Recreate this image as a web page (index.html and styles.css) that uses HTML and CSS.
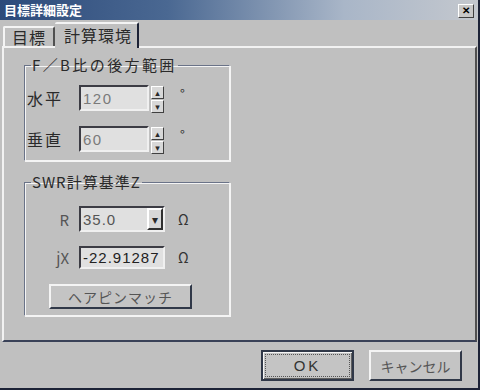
FILE: index.html
```html
<!DOCTYPE html>
<html lang="ja">
<head>
  <meta charset="UTF-8" />
  <title>目標詳細設定</title>
  <link rel="stylesheet" href="styles.css">
</head>
<body>
  <div class="window">
    <div class="titlebar">
      <span class="title">目標詳細設定</span>
      <button class="close-btn" type="button">&#x2715;</button>
    </div>

    <div class="tabs">
      <div class="tab">目標</div>
      <div class="tab active">計算環境</div>
    </div>

    <div class="panel">
      <fieldset class="group group-fb">
        <legend>F／B比の後方範囲</legend>
        <div class="row">
          <label>水平</label>
          <div class="spin">
            <input type="text" class="field dim" value="120" />
            <span class="spin-btns"><span class="arrow">&#9652;</span><span class="arrow">&#9662;</span></span>
          </div>
          <span class="unit">°</span>
        </div>
        <div class="row">
          <label>垂直</label>
          <div class="spin">
            <input type="text" class="field dim" value="60" />
            <span class="spin-btns"><span class="arrow">&#9652;</span><span class="arrow">&#9662;</span></span>
          </div>
          <span class="unit">°</span>
        </div>
      </fieldset>

      <fieldset class="group group-swr">
        <legend>SWR計算基準Z</legend>
        <div class="row">
          <label class="right">R</label>
          <div class="combo">
            <span class="combo-value">35.0</span>
            <span class="combo-btn">&#9662;</span>
          </div>
          <span class="unit">Ω</span>
        </div>
        <div class="row">
          <label class="right">jX</label>
          <input type="text" class="field wide" value="-22.91287" />
          <span class="unit">Ω</span>
        </div>
        <button type="button" class="btn hairpin">ヘアピンマッチ</button>
      </fieldset>
    </div>

    <div class="footer">
      <button type="button" class="btn default">OK</button>
      <button type="button" class="btn">キャンセル</button>
    </div>
  </div>
</body>
</html>
```

FILE: styles.css
```css
* {
  box-sizing: border-box;
}

body {
  margin: 0;
  font-family: "Noto Sans CJK JP", "DejaVu Sans", sans-serif;
  color: #2a2a2a;
  background: #c0c0c0;
}

.window {
  width: 480px;
  height: 390px;
  background: #c0c0c0;
  border-right: 2px solid #1c2236;
  border-bottom: 2px solid #1c2236;
  display: flex;
  flex-direction: column;
}

.titlebar {
  height: 20px;
  background: linear-gradient(to right, #2c4a7a 0%, #4a6892 35%, #a9b6c8 72%, #c4c8ce 100%);
  display: flex;
  align-items: center;
  justify-content: space-between;
  padding: 0 4px 0 4px;
}

.title {
  color: #fff;
  font-size: 13px;
  font-weight: bold;
  line-height: 20px;
}

.close-btn {
  width: 16px;
  height: 14px;
  margin-top: 2px;
  padding: 0;
  font-size: 10px;
  font-weight: bold;
  line-height: 10px;
  color: #000;
  background: #c8c8c8;
  border: 1px solid;
  border-color: #fff #404040 #404040 #fff;
}

.tabs {
  height: 26px;
  display: flex;
  align-items: flex-end;
  padding-left: 3px;
  position: relative;
  z-index: 1;
}

.tab {
  width: 52px;
  height: 20px;
  padding: 0 0 0 7px;
  font-size: 16px;
  line-height: 18px;
  letter-spacing: 1px;
  white-space: nowrap;
  border: 2px solid;
  border-color: #f4f4f4 #505050 transparent #f4f4f4;
  border-bottom: none;
  border-radius: 2px 2px 0 0;
  background: #c0c0c0;
}

.tab.active {
  width: 84px;
  height: 26px;
  margin-bottom: -2px;
  padding: 0 0 0 9px;
  line-height: 22px;
  border-left: 0;
  border-right-color: #1c2236;
}

.panel {
  height: 296px;
  margin: 0 1px 0 2px;
  border: 2px solid;
  border-color: #f2f2f2 #505050 #3a4258 #f2f2f2;
  padding: 9px 0 0 20px;
  display: flex;
  flex-direction: column;
  gap: 13px;
}

.group {
  width: 206px;
  margin: 0;
  padding: 0 0 0 2px;
  border: 1px solid;
  border-color: #6a7388 #f4f4f4 #f4f4f4 #6a7388;
  box-shadow: 1px 1px 0 #f4f4f4, inset 1px 1px 0 #f4f4f4;
}

.group legend {
  padding: 0 1px;
  margin-left: 4px;
  font-size: 15px;
  line-height: 16px;
  letter-spacing: 2.4px;
  white-space: nowrap;
}

.group-swr legend {
  letter-spacing: 1px;
}

.group-fb {
  height: 104px;
  padding-top: 12px;
  display: flex;
  flex-direction: column;
  gap: 15px;
}

.group-swr {
  height: 142px;
  padding-top: 16px;
  display: flex;
  flex-direction: column;
  gap: 15px;
}

.row {
  display: grid;
  grid-template-columns: 42px 86px auto;
  column-gap: 10px;
  align-items: center;
  height: 26px;
}

.group-swr .row {
  height: 24px;
}

.row label {
  font-size: 16px;
  letter-spacing: 2px;
  white-space: nowrap;
}

.row label.right {
  text-align: right;
  letter-spacing: 0;
  font-size: 15px;
  color: #555;
}

.unit {
  font-size: 14px;
  margin-left: 3px;
  color: #333;
}

.group-fb .unit {
  align-self: start;
  margin-top: -1px;
  margin-left: 5px;
  font-size: 13px;
}

.field {
  height: 26px;
  width: 70px;
  padding: 0 2px;
  font-family: "Liberation Sans", sans-serif;
  font-size: 15px;
  letter-spacing: 1.5px;
  color: #222;
  background: #e0e0e0;
  border: 2px solid;
  border-color: #3c3c44 #f0f0f0 #f0f0f0 #3c3c44;
  outline: none;
}

.field.dim {
  color: #7a7a7a;
}

.field.wide {
  width: 86px;
  height: 23px;
  letter-spacing: 1px;
}

.spin {
  display: flex;
  height: 26px;
}

.spin-btns {
  width: 16px;
  display: flex;
  flex-direction: column;
  gap: 1px;
  padding: 1px 1px 1px 2px;
}

.arrow {
  flex: 1;
  font-size: 9px;
  line-height: 11px;
  text-align: center;
  background: #d8d8d8;
  border: 1px solid;
  border-color: #fff #404040 #404040 #fff;
}

.combo {
  width: 86px;
  height: 26px;
  display: flex;
  align-items: center;
  background: #e0e0e0;
  border: 2px solid;
  border-color: #3c3c44 #f0f0f0 #f0f0f0 #3c3c44;
}

.combo-value {
  flex: 1;
  padding-left: 2px;
  font-family: "Liberation Sans", sans-serif;
  font-size: 15px;
  letter-spacing: 1px;
  color: #555;
}

.combo-btn {
  width: 16px;
  height: 22px;
  font-size: 12px;
  line-height: 18px;
  text-align: center;
  background: #d8d8d8;
  border: 2px solid;
  border-color: #fff #303030 #303030 #fff;
}

.btn {
  font-family: "Noto Sans CJK JP", sans-serif;
  font-size: 14px;
  color: #555;
  background: #c4c4c4;
  border: 2px solid;
  border-color: #f4f4f4 #303848 #303848 #f4f4f4;
  padding: 0;
}

.hairpin {
  width: 143px;
  height: 25px;
  margin-left: 22px;
  letter-spacing: 1px;
}

.footer {
  display: flex;
  justify-content: flex-end;
  gap: 15px;
  padding: 8px 16px 0 0;
}

.footer .btn {
  width: 93px;
  height: 31px;
}

.btn.default {
  font-family: "Liberation Sans", sans-serif;
  font-size: 15px;
  letter-spacing: 3px;
  color: #333;
  border-color: #303848;
  outline: 1px dotted #555;
  outline-offset: -5px;
  box-shadow: inset 1px 1px 0 #f4f4f4, inset -1px -1px 0 #606060;
}
```
